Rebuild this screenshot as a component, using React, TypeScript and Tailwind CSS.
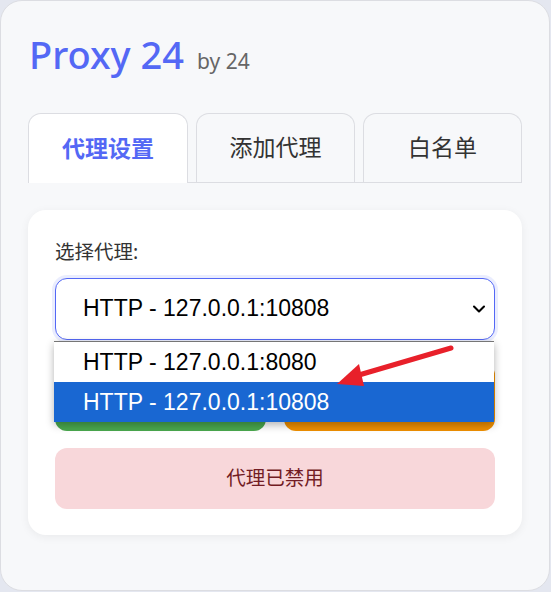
import { ChevronDown } from "lucide-react"

const options = ["HTTP - 127.0.0.1:8080", "HTTP - 127.0.0.1:10808"]

export default function App() {
  const selected = options[1]

  return (
    <div className="min-h-screen bg-[#e4e7f0]">
      <div className="relative w-[550px] h-[591px] rounded-[22px] border border-[#dcdde2] bg-[#f7f8fa] px-[27px] pt-[31px] font-['Noto_Sans','Noto_Sans_CJK_SC',sans-serif]">
        {/* header */}
        <div className="flex items-baseline gap-[13px] pl-[1px]">
          <h1 className="text-[38px] leading-[45px] font-medium text-[#5468f5]">Proxy 24</h1>
          <span className="text-[21px] text-[#666]">by 24</span>
        </div>

        {/* tabs */}
        <div className="mt-[35px] flex gap-[8px] border-b border-[#dcdde2]">
          <button className="-mb-px h-[70px] w-[161px] rounded-t-[13px] border border-b-0 border-[#dcdde2] bg-white text-[23px] font-semibold text-[#5468f5]">
            代理设置
          </button>
          <button className="h-[69px] w-[160px] rounded-t-[13px] border border-b-0 border-[#dcdde2] bg-[#f7f8fa] text-[23px] text-[#333]">
            添加代理
          </button>
          <button className="h-[69px] w-[160px] rounded-t-[13px] border border-b-0 border-[#dcdde2] bg-[#f7f8fa] text-[23px] text-[#333]">
            白名单
          </button>
        </div>

        {/* card */}
        <div className="mt-[27px] rounded-[18px] bg-white px-[27px] pt-[28px] pb-[26px] shadow-[0_2px_10px_rgba(0,0,0,0.06)]">
          <label className="block text-[19.5px] leading-[27px] text-[#333]">选择代理:</label>

          <div className="relative mt-[13px]">
            <div className="flex h-[62px] items-center justify-between rounded-[12px] border border-[#5468f5] bg-white pl-[27px] pr-[5px] shadow-[0_0_0_3px_rgba(84,104,245,0.12)] font-['Liberation_Sans',Arial,sans-serif] text-[23px] text-black">
              <span>{selected}</span>
              <ChevronDown size={20} strokeWidth={2.5} />
            </div>

            {/* open dropdown */}
            <div className="absolute left-[-1px] top-[63px] z-10 w-[440px] bg-white shadow-[0_3px_8px_rgba(0,0,0,0.3)] font-['Liberation_Sans',Arial,sans-serif] text-[23px]">
              {options.map((o) => (
                <div
                  key={o}
                  className={
                    o === selected
                      ? "h-[40px] pl-[29px] leading-[40px] bg-[#1967d2] text-white"
                      : "h-[41px] pl-[29px] leading-[41px] text-black border-t border-[#767676]"
                  }
                >
                  {o}
                </div>
              ))}
            </div>
          </div>

          {/* buttons, covered by the open list */}
          <div className="mt-[23px] flex gap-[18px]">
            <button className="h-[68px] flex-1 rounded-[12px] bg-[#4aa84e]" />
            <button className="h-[68px] flex-1 rounded-[12px] bg-[#ef8f00]" />
          </div>

          <div className="mt-[17px] flex h-[61px] items-center justify-center rounded-[12px] bg-[#f8d7da] text-[19.5px] text-[#721c24]">
            代理已禁用
          </div>
        </div>

        {/* annotation arrow */}
        <svg className="absolute left-[330px] top-[340px] z-20" width="130" height="50" viewBox="0 0 130 50">
          <line x1="120" y1="7" x2="28" y2="34" stroke="#e8202a" strokeWidth="5" strokeLinecap="round" />
          <polygon points="6,43 28,23 33,45" fill="#e8202a" />
        </svg>
      </div>
    </div>
  )
}
